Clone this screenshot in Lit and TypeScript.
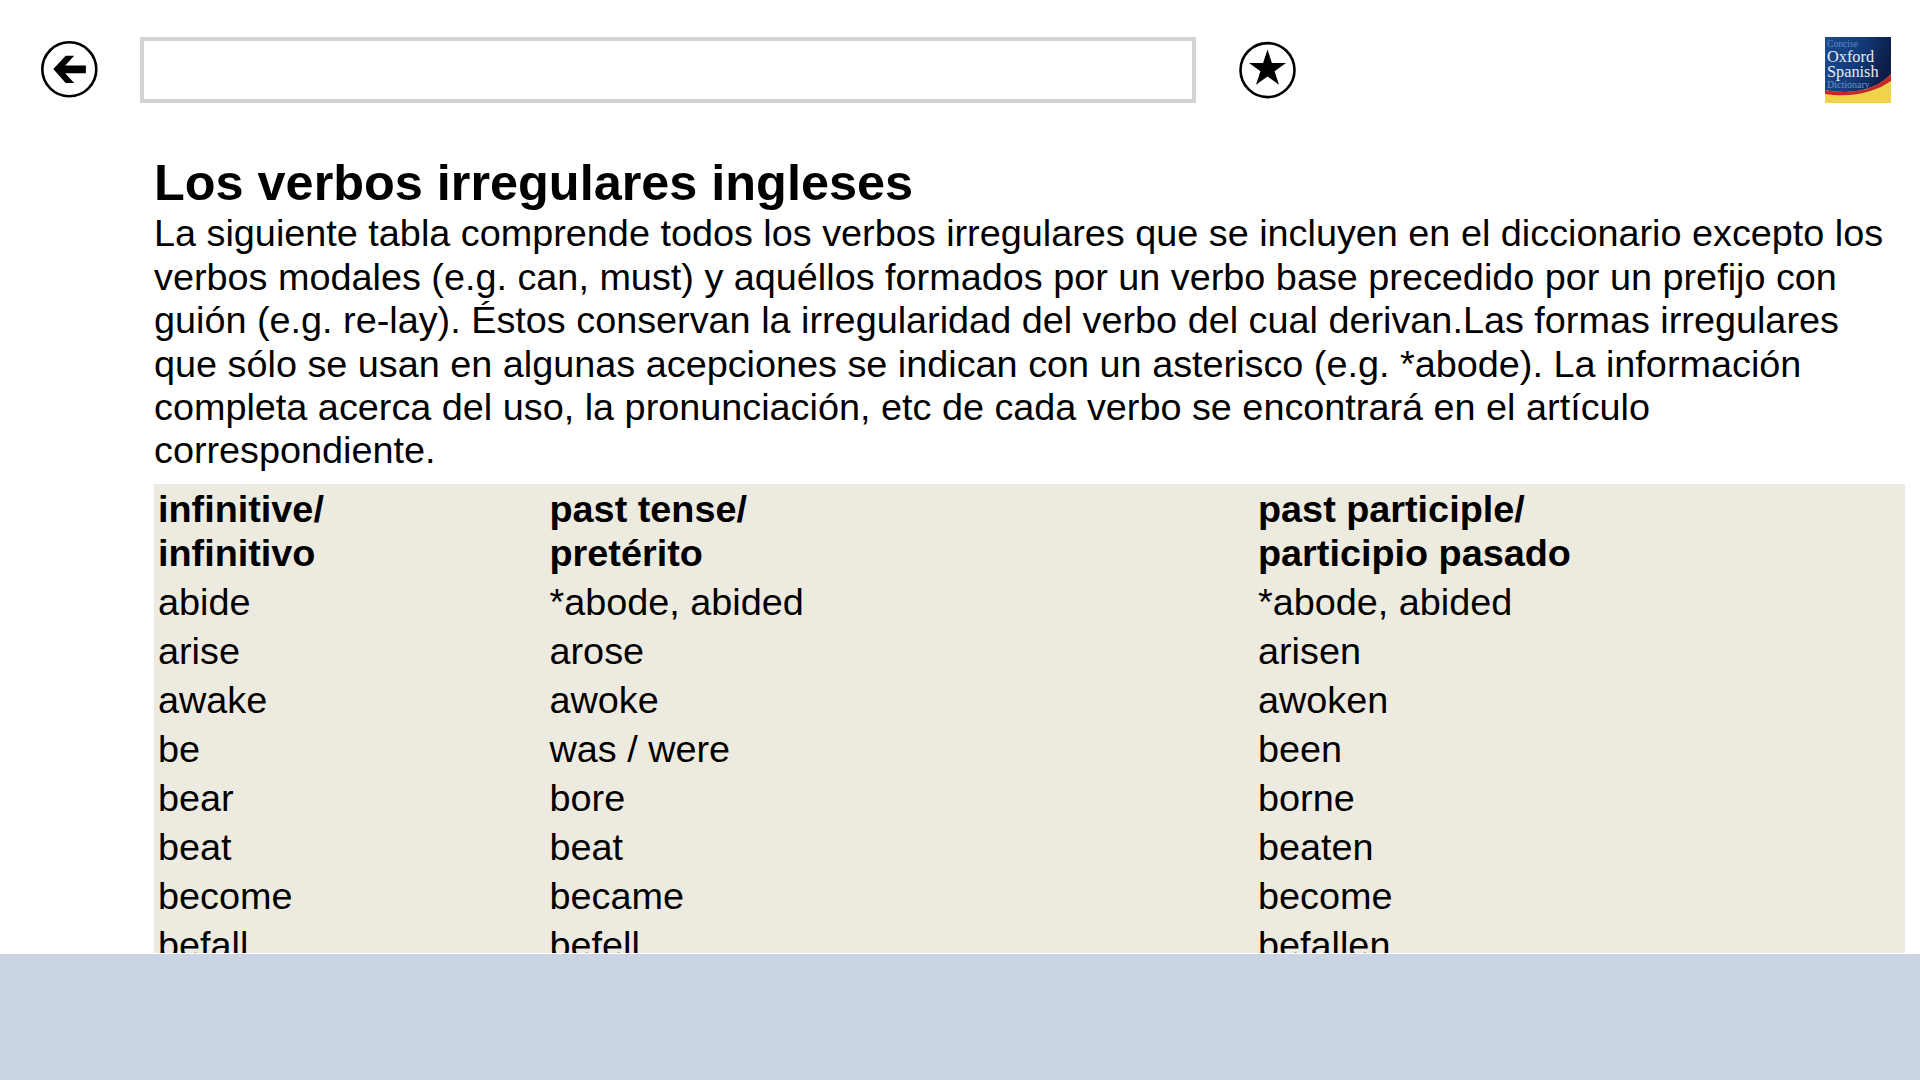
import { LitElement, html, css } from "lit";
import { customElement } from "lit/decorators.js";

const rows = [
  ["abide", "*abode, abided", "*abode, abided"],
  ["arise", "arose", "arisen"],
  ["awake", "awoke", "awoken"],
  ["be", "was / were", "been"],
  ["bear", "bore", "borne"],
  ["beat", "beat", "beaten"],
  ["become", "became", "become"],
  ["befall", "befell", "befallen"],
];

@customElement("app-root")
export class AppRoot extends LitElement {
  static styles = css`
    :host { display: flex; flex-direction: column; width: 1920px; height: 1080px; overflow: hidden; background: #fff; color: #000; font-family: "Liberation Sans", Arial, sans-serif; }
    .main { height: 953px; overflow: hidden; flex: none; }
    .bar { height: 126px; margin-top: 1px; flex: none; background: #cbd4e3; }
    .top { display: flex; align-items: center; height: 66px; padding: 37px 29px 0 41px; }
    .icon { width: 58px; height: 58px; flex: none; display: block; }
    .search { width: 1056px; height: 66px; box-sizing: border-box; border: 4px solid #d3d3d3; margin: 0 43px 0 41px; flex: none; background: #fff; }
    .logo { margin-left: auto; width: 66px; height: 66px; flex: none; position: relative; overflow: hidden; background: #f0d34c; font-family: "Liberation Serif", serif; color: #e8ecf4; }
    .logo svg { display: block; }
    .logo div { position: absolute; left: 2px; white-space: nowrap; }
    .l1 { top: 0.5px; font-size: 9.6px; line-height: 11px; color: #6188bf; }
    .l2 { top: 13.2px; font-size: 16.3px; line-height: 14px; }
    .l3 { top: 27.5px; font-size: 16.3px; line-height: 14px; }
    .l4 { top: 42px; font-size: 10px; line-height: 11px; color: #6f90c4; }
    .content { margin: 51px 15px 0 154px; }
    h1 { margin: 0; font-size: 50.4px; line-height: 58.4px; font-weight: 700; }
    p { margin: 0; font-size: 37.8px; line-height: 43.4px; }
    .table { display: grid; grid-template-columns: 391.5px 708.5px 1fr; background: #edebe0; margin-top: 11.2px; }
    .cell { padding: 0 4px; font-size: 37.8px; line-height: 49px; }
    .head { font-weight: 700; line-height: 44px; padding-top: 2.8px; padding-bottom: 2.8px; }
  `;

  render() {
    return html`
      <div class="main">
        <div class="top">
          <svg class="icon" viewBox="0 0 58 58" aria-label="Atrás">
            <circle cx="28.3" cy="28.3" r="27" fill="#fff" stroke="#000" stroke-width="2.6" />
            <path d="M12.3 28 L24.7 14.8 L33.2 14.8 L24.2 24.6 L44.9 24.6 L44.9 32.2 L24.2 32.2 L33.2 41.9 L24.7 41.9 Z" fill="#000" />
          </svg>
          <div class="search"></div>
          <svg class="icon" viewBox="0 0 58 58" aria-label="Favoritos">
            <circle cx="28.5" cy="29.1" r="27" fill="#fff" stroke="#000" stroke-width="2.6" />
            <path d="M28.5 8.5 L32.9 22 L47 22 L35.6 30.3 L40 43.8 L28.5 35.5 L17 43.8 L21.4 30.3 L10 22 L24.1 22 Z" fill="#000" />
          </svg>
          <div class="logo">
            <svg width="66" height="66" viewBox="0 0 66 66">
              <defs>
                <linearGradient id="g" x1="0" y1="0" x2="1" y2="0.25">
                  <stop offset="0" stop-color="#1a4a8e" />
                  <stop offset="0.55" stop-color="#123b7c" />
                  <stop offset="1" stop-color="#0c1d48" />
                </linearGradient>
              </defs>
              <path d="M0 0H66V37C54 50 32 59 0 53Z" fill="url(#g)" />
              <path d="M0 53C32 59 54 50 66 37V44C50 55 28 61 0 57Z" fill="#c4262c" />
            </svg>
            <div class="l1">Concise</div>
            <div class="l2">Oxford</div>
            <div class="l3">Spanish</div>
            <div class="l4">Dictionary</div>
          </div>
        </div>
        <div class="content">
          <h1>Los verbos irregulares ingleses</h1>
          <p>La siguiente tabla comprende todos los verbos irregulares que se incluyen en el diccionario excepto los verbos modales (e.g. can, must) y aquéllos formados por un verbo base precedido por un prefijo con guión (e.g. re-lay). Éstos conservan la irregularidad del verbo del cual derivan.Las formas irregulares que sólo se usan en algunas acepciones se indican con un asterisco (e.g. *abode). La información completa acerca del uso, la pronunciación, etc de cada verbo se encontrará en el artículo correspondiente.</p>
          <div class="table">
            <div class="cell head">infinitive/<br />infinitivo</div>
            <div class="cell head">past tense/<br />pretérito</div>
            <div class="cell head">past participle/<br />participio pasado</div>
            ${rows.map((r) => r.map((c) => html`<div class="cell">${c}</div>`))}
          </div>
        </div>
      </div>
      <div class="bar"></div>
    `;
  }
}
